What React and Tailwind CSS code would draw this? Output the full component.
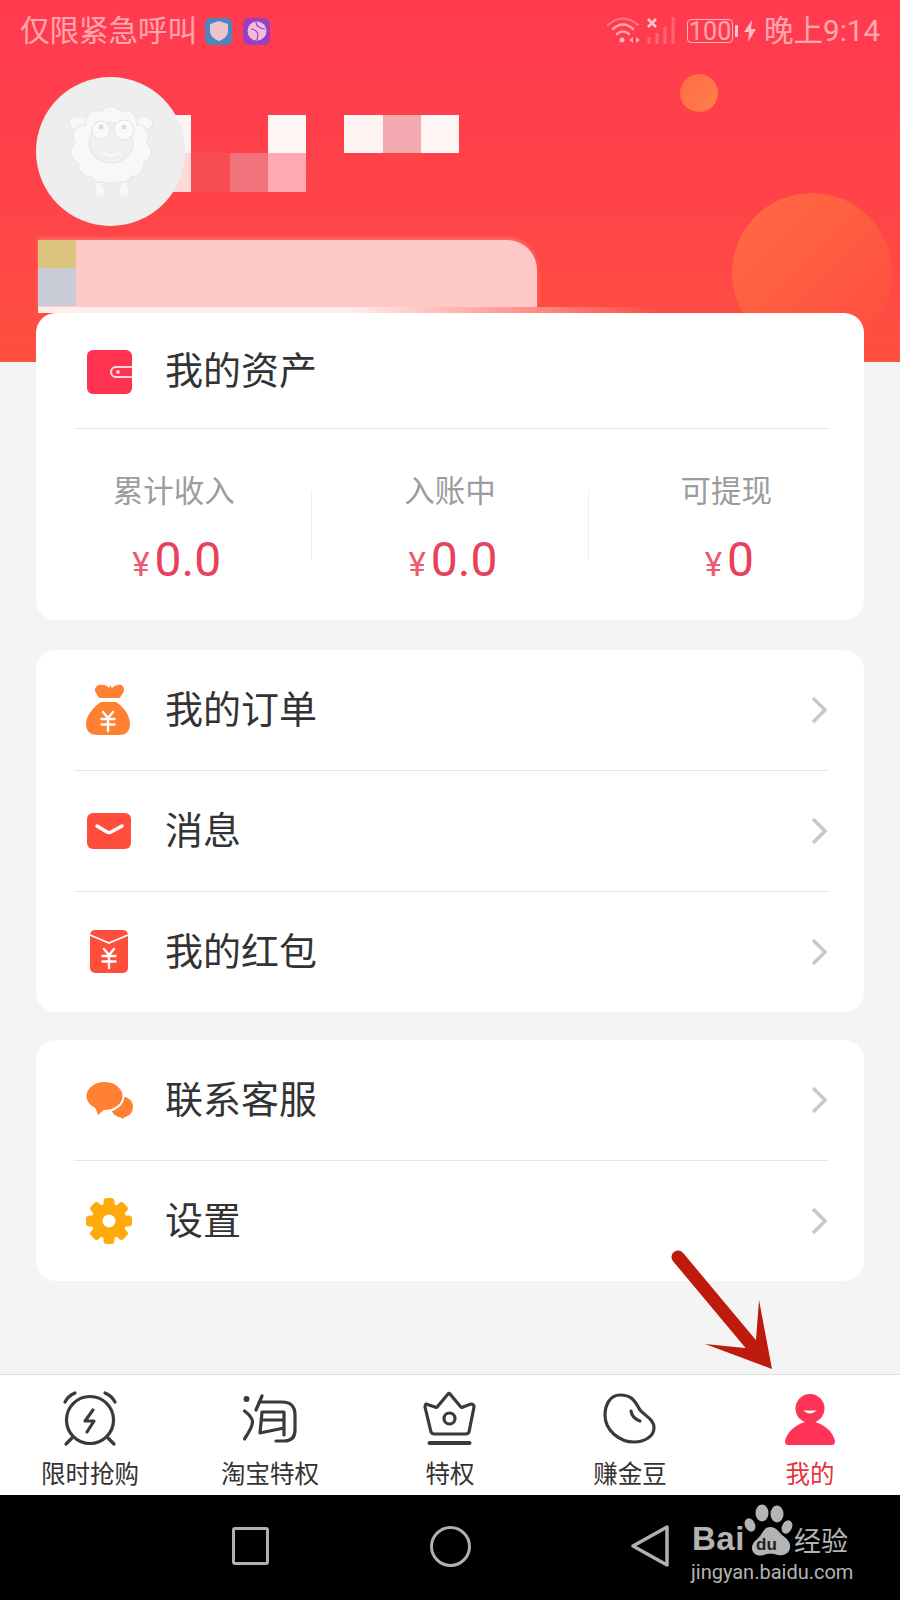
import React from "react";

const mosaic = [
  "bg-[#fff3f3]", "", "", "bg-[#fff5f5]", "", "bg-[#fff3f3]", "bg-[#f2a9af]", "bg-[#fff5f5]",
  "bg-[#ffd8d8]", "bg-[#f74c52]", "bg-[#f0737c]", "bg-[#fdaab0]", "", "", "", "",
];

function Sheep() {
  const wool = [
    [60, 28, 11], [46, 32, 11], [74, 32, 11], [34, 46, 11], [86, 46, 11], [31, 62, 11], [89, 62, 11],
    [39, 75, 11], [81, 75, 11], [50, 81, 11], [60, 82, 11], [70, 81, 11], [60, 55, 28],
  ];
  return (
    <svg width="120" height="120" viewBox="0 0 120 120" className="-mt-[3px]">
      <ellipse cx="29" cy="34" rx="11" ry="7.5" fill="#f8f8f8" stroke="#e6e6e6" strokeWidth="1" transform="rotate(12 29 34)" />
      <ellipse cx="91" cy="34" rx="11" ry="7.5" fill="#f8f8f8" stroke="#e6e6e6" strokeWidth="1" transform="rotate(-12 91 34)" />
      <path d="M48 90v10M73 90v10" stroke="#f8f8f8" strokeWidth="6" />
      <circle cx="49" cy="102" r="4.5" fill="#f8f8f8" />
      <circle cx="73" cy="102" r="4.5" fill="#f8f8f8" />
      {wool.map(([x, y, r]) => (
        <circle key={`${x}-${y}`} cx={x} cy={y} r={r + 1} fill="#e6e6e6" />
      ))}
      {wool.map(([x, y, r]) => (
        <circle key={`w${x}-${y}`} cx={x} cy={y} r={r} fill="#f8f8f8" />
      ))}
      <ellipse cx="60" cy="53" rx="22" ry="20" fill="#f0f0f0" stroke="#e4e4e4" strokeWidth="1" />
      <circle cx="50" cy="40" r="9" fill="#fafafa" stroke="#e2e2e2" strokeWidth="1" />
      <circle cx="73" cy="40" r="10" fill="#fafafa" stroke="#e2e2e2" strokeWidth="1" />
      <circle cx="50" cy="37" r="2.5" fill="#dcdcdc" />
      <circle cx="73" cy="37" r="2.5" fill="#dcdcdc" />
      <path d="M51 61Q60 70 70 61" fill="none" stroke="#fafafa" strokeWidth="2" />
    </svg>
  );
}

function StatusIcons() {
  return (
    <svg width="90" height="40" viewBox="605 10 90 40" className="mr-[-10px]">
      <g fill="none" stroke="#ffffff" strokeOpacity="0.55" strokeLinecap="round">
        <path d="M606 24Q621 11 636 24" strokeWidth="2" strokeOpacity="0.3" />
        <path d="M611 28Q621 19 631 28" strokeWidth="2.5" />
        <path d="M615 33Q621 28 627 33" strokeWidth="2.5" />
      </g>
      <circle cx="620" cy="39" r="2.5" fill="#ffffff" fillOpacity="0.6" />
      <path d="M631 36l-4 3 4 3zM634 36l4 3-4 3z" fill="#ffffff" fillOpacity="0.55" />
      <path d="M646 18l8 8M654 18l-8 8" stroke="#ffffff" strokeOpacity="0.7" strokeWidth="2.5" />
      <g stroke="#ffffff" strokeOpacity="0.22" strokeWidth="3">
        <path d="M647 36v7M655 32v11M663 26v17M671 16v27" />
      </g>
    </svg>
  );
}

function Header() {
  return (
    <div className="relative h-[362px] overflow-hidden bg-gradient-to-b from-[#ff3a50] via-[#ff4249] to-[#ff4f40]">
      <div className="absolute left-[680px] top-[74px] w-[38px] h-[38px] rounded-full bg-gradient-to-br from-[#ff6a48] to-[#ff8048]" />
      <div className="absolute left-[732px] top-[193px] w-[160px] h-[160px] rounded-full bg-gradient-to-br from-[#ff6a42] to-[#ff4c40]" />

      <div className="relative flex items-center justify-between h-[60px] pl-[20px] pr-[20px] pt-[2px] text-[#ffffff]/55">
        <div className="flex items-center">
          <span className="text-[29.5px] leading-[36px]">仅限紧急呼叫</span>
          <div className="ml-[8px] w-[27px] h-[27px] rounded-[6px] bg-[#4a88bd] flex items-center justify-center">
            <svg width="18" height="20" viewBox="0 0 18 20">
              <path d="M9 0l9 3v7c0 5-4 8-9 10-5-2-9-5-9-10V3z" fill="#eec2cf" />
            </svg>
          </div>
          <div className="ml-[11px] w-[27px] h-[27px] rounded-[6px] bg-[#9a3fbe] flex items-center justify-center">
            <svg width="20" height="20" viewBox="0 0 20 20">
              <circle cx="10" cy="10" r="9.5" fill="#f2bcdc" />
              <path d="M4 8q5 0 7 5l-1 6M9 1q0 6 9 7" fill="none" stroke="#9a3fbe" strokeWidth="1.2" />
            </svg>
          </div>
        </div>
        <div className="flex items-center">
          <StatusIcons />
          <div className="w-[46px] h-[24px] rounded-[4px] border border-[#ffffff]/60 flex items-center justify-center text-[25px] leading-none">
            100
          </div>
          <div className="ml-[2px] w-[3px] h-[12px] rounded-[1px] bg-[#ffffff]/70" />
          <svg width="12" height="22" viewBox="0 0 12 22" className="ml-[6px]">
            <path d="M8 0L0 12h5l-1 10 8-13H7z" fill="#ffffff" fillOpacity="0.65" />
          </svg>
          <span className="ml-[8px] text-[29.5px] leading-[36px]">晚上9:14</span>
        </div>
      </div>

      <div className="relative flex mt-[17px] ml-[36px]">
        <div className="relative z-10 w-[149px] h-[149px] rounded-full bg-[#eeeeee] flex items-center justify-center shrink-0">
          <Sheep />
        </div>
        <div className="grid grid-cols-[repeat(8,38.3px)] grid-rows-[38.3px_38.3px] mt-[38px] -ml-[32px]">
          {mosaic.map((c, i) => (
            <div key={i} className={c} />
          ))}
        </div>
      </div>

      <div className="relative flex ml-[38px] mt-[14px] w-[499px] h-[67px] bg-[#fec8c6] rounded-tr-[30px] shadow-[0_-2px_4px_rgba(254,200,198,0.35)]">
        <div className="w-[38px] flex flex-col">
          <div className="h-[28px] bg-[#dcc47e]" />
          <div className="h-[38px] bg-[#c9ccd6]" />
        </div>
      </div>
      <div className="relative ml-[38px] w-[620px] h-[6px] bg-gradient-to-r from-[#ffeeec] via-[#ffeeec] to-transparent" />
    </div>
  );
}

function Chevron() {
  return (
    <svg width="18" height="30" viewBox="0 0 18 30" className="shrink-0">
      <path d="M3 3l12 12L3 27" fill="none" stroke="#c8c8c8" strokeWidth="3.5" />
    </svg>
  );
}

function Yuan({ cx, cy }) {
  return (
    <path
      d={`M${cx - 5} ${cy - 9}l5 6 5-6M${cx - 6.5} ${cy - 2}h13M${cx - 6.5} ${cy + 3.5}h13M${cx} ${cy - 3}v13`}
      fill="none"
      stroke="#fff"
      strokeWidth="2.4"
      strokeLinecap="round"
      strokeLinejoin="round"
    />
  );
}

function WalletIcon() {
  return (
    <svg width="60" height="60" viewBox="80 340 60 60">
      <rect x="87" y="349" width="45" height="44" rx="6" fill="#ff3350" />
      <path d="M132 366h-16a5 5 0 0 0 0 10h16" fill="#ff3350" stroke="#ffd6dc" strokeWidth="2.2" />
      <circle cx="118" cy="371" r="1.9" fill="#ffd6dc" />
    </svg>
  );
}

function BagIcon() {
  return (
    <svg width="60" height="60" viewBox="80 680 60 60">
      <path d="M95 690c0-4 4-6 8-5 3 0 4 1 6 3l1-3 2 3c2-2 4-3 6-3 4-1 6 2 6 5 0 3-3 5-4 8h-21c-1-3-4-5-4-8z" fill="#ff8030" />
      <path d="M101 702h15c8 5 14 14 14 22 0 8-5 11-11 11h-21c-7 0-12-3-12-11 0-8 7-17 15-22z" fill="#ff8030" />
      <Yuan cx={108} cy={721} />
    </svg>
  );
}

function MailIcon() {
  return (
    <svg width="60" height="60" viewBox="80 802 60 60">
      <rect x="87" y="814" width="44" height="36" rx="6" fill="#ff4f3c" />
      <path d="M97 827l10 6q2 1 4 0l11-6" fill="none" stroke="#fff" strokeWidth="3.4" strokeLinecap="round" strokeLinejoin="round" />
    </svg>
  );
}

function PacketIcon() {
  return (
    <svg width="60" height="60" viewBox="80 922 60 60">
      <rect x="90" y="930" width="38" height="43" rx="5" fill="#ff4f3c" />
      <path d="M90 935l19 8 19-8" fill="none" stroke="#fff" strokeWidth="1.8" />
      <Yuan cx={109} cy={958} />
    </svg>
  );
}

function ChatIcon() {
  return (
    <svg width="60" height="60" viewBox="80 1070 60 60">
      <ellipse cx="122" cy="1107" rx="11" ry="10.5" fill="#ff8030" />
      <path d="M116 1114l7 5 3-4z" fill="#ff8030" />
      <ellipse cx="104.5" cy="1096" rx="19" ry="15" fill="#ff8030" stroke="#fff" strokeWidth="2" />
      <path d="M95 1107l3 8 6-5z" fill="#ff8030" />
    </svg>
  );
}

function GearIcon() {
  const cx = 109;
  const cy = 1221;
  const teeth = [0, 45, 90, 135, 180, 225, 270, 315];
  return (
    <svg width="60" height="60" viewBox="80 1191 60 60">
      {teeth.map((a) => (
        <rect
          key={a}
          x={cx - 5.5}
          y={cy - 23}
          width="11"
          height="12"
          rx="3.5"
          fill="#ffaa0a"
          transform={`rotate(${a} ${cx} ${cy})`}
        />
      ))}
      <circle cx={cx} cy={cy} r="17.5" fill="#ffaa0a" />
      <circle cx={cx} cy={cy} r="6.5" fill="#fff" />
    </svg>
  );
}

function Row({ icon, label, border }) {
  return (
    <>
      <div className="flex items-center h-[120px] pl-[44px] pr-[36px]">
        {icon}
        <span className="ml-[25px] flex-1 text-[38px] leading-[50px] text-[#333333]">{label}</span>
        <Chevron />
      </div>
      {border && <div className="h-px ml-[38px] mr-[36px] bg-[#e6e6e6]" />}
    </>
  );
}

function Stat({ label, value }) {
  return (
    <div className="flex-1 flex flex-col items-center">
      <div className="text-[30.5px] leading-[40px] text-[#9c9c9c]">{label}</div>
      <div className="mt-[18px] ml-[6px] flex items-baseline leading-[60px] text-[#e8415c]">
        <span className="text-[33px] mr-[5px] text-[#ee5a6e]">¥</span>
        <span className="text-[48px]">{value}</span>
      </div>
    </div>
  );
}

function Tab({ icon, label, active }) {
  return (
    <div className="flex-1 flex flex-col items-center pt-[13px]">
      {icon}
      <div className={`mt-[12px] text-[24.5px] leading-[30px] ${active ? "text-[#e8333f]" : "text-[#333333]"}`}>{label}</div>
    </div>
  );
}

const tabStroke = { fill: "none", stroke: "#3a3a3a", strokeWidth: 3.2, strokeLinecap: "round", strokeLinejoin: "round" };

function Watermark() {
  return (
    <div className="absolute left-[685px] top-[1500px] w-[170px] h-[85px] text-[#b4b4b4] font-['Liberation_Sans',sans-serif]">
      <svg width="170" height="85" viewBox="0 0 170 85" className="absolute left-0 top-0">
        <g fill="#b4b4b4">
          <ellipse cx="77" cy="13" rx="6.5" ry="8.5" />
          <ellipse cx="92" cy="14" rx="6.5" ry="8.5" />
          <ellipse cx="65" cy="25" rx="5" ry="7" transform="rotate(-25 65 25)" />
          <ellipse cx="102" cy="27" rx="5" ry="7" transform="rotate(25 102 27)" />
          <path d="M85 27c6 0 8 4 12 8 5 4 9 7 8 13-1 6-7 8-12 7-5-1-9-2-14 0-6 2-12-1-12-7 0-6 5-8 8-12 3-4 5-9 10-9z" />
        </g>
        <text x="71" y="50" fontSize="17" fontWeight="700" fill="#222" fontFamily="Liberation Sans">du</text>
      </svg>
      <span className="absolute left-[7px] top-[21px] text-[33px] leading-[36px] font-bold tracking-[0.5px]">Bai</span>
      <span className="absolute left-[109px] top-[24px] text-[27px] leading-[32px] font-['Noto_Sans_CJK_SC',sans-serif]">经验</span>
      <span className="absolute left-[6px] top-[60px] text-[20px] leading-[24px] font-['Roboto',sans-serif]">jingyan.baidu.com</span>
    </div>
  );
}

export default function App() {
  return (
    <div className="relative w-[900px] h-[1600px] flex flex-col overflow-hidden bg-[#f4f4f4] font-['Roboto','Noto_Sans_CJK_SC',sans-serif]">
      <Header />

      <main className="flex-1 px-[36px] -mt-[49px] relative">
        <section className="h-[307px] rounded-[20px] bg-white">
          <div className="flex items-center h-[115px] pl-[44px]">
            <WalletIcon />
            <span className="ml-[25px] text-[38px] leading-[50px] text-[#333333]">我的资产</span>
          </div>
          <div className="h-px ml-[38px] mr-[36px] bg-[#e6e6e6]" />
          <div className="flex items-start pt-[43px]">
            <Stat label="累计收入" value="0.0" />
            <div className="w-px h-[70px] mt-[18px] bg-[#eeeeee]" />
            <Stat label="入账中" value="0.0" />
            <div className="w-px h-[70px] mt-[18px] bg-[#eeeeee]" />
            <Stat label="可提现" value="0" />
          </div>
        </section>

        <section className="mt-[30px] rounded-[20px] bg-white">
          <Row icon={<BagIcon />} label="我的订单" border />
          <Row icon={<MailIcon />} label="消息" border />
          <Row icon={<PacketIcon />} label="我的红包" />
        </section>

        <section className="mt-[28px] rounded-[20px] bg-white">
          <Row icon={<ChatIcon />} label="联系客服" border />
          <Row icon={<GearIcon />} label="设置" />
        </section>
      </main>

      <nav className="flex h-[121px] border-t border-[#e0e0e0] bg-white">
        <Tab
          label="限时抢购"
          icon={
            <svg width="60" height="60" viewBox="60 1388 60 60" {...tabStroke}>
              <circle cx="90" cy="1420" r="23.5" />
              <path d="M65 1402q3-6 10-9M115 1402q-3-6-10-9M66 1444l6-6M114 1444l-6-6" />
              <path d="M93 1410l-8 11h9l-7 11" />
            </svg>
          }
        />
        <Tab
          label="淘宝特权"
          icon={
            <svg width="60" height="60" viewBox="240 1388 60 60" {...tabStroke}>
              <circle cx="246.5" cy="1399" r="3" fill="#3a3a3a" stroke="none" />
              <path d="M244.5 1411q8 6 8 11t-8 17" />
              <path d="M262 1396l-6 14M259 1402h23q13 0 13 13v15q0 11-11 11h-8" />
              <path d="M262 1412h22v23M262 1420h22M262 1412l-2 21 24-5" />
            </svg>
          }
        />
        <Tab
          label="特权"
          icon={
            <svg width="60" height="60" viewBox="420 1388 60 60" {...tabStroke}>
              <path d="M426 1404q-1 1-1 3l6 25q1 2 3 2h32q2 0 3-2l5-25q0-3-3-3l-8 3q-2 1-3-1l-10-12q-1-1-2 0l-10 12q-1 2-3 1z" />
              <circle cx="449.5" cy="1418.5" r="5.5" />
              <path d="M429.5 1443h40" strokeWidth="4" />
            </svg>
          }
        />
        <Tab
          label="赚金豆"
          icon={
            <svg width="60" height="60" viewBox="600 1388 60 60" {...tabStroke}>
              <path d="M620 1395c-10 0-15 10-15 20 0 16 15 27 29 27 11 0 20-6 20-14 0-9-9-12-14-18-4-6-6-15-20-15z" />
              <path d="M631 1411q1 7 9 10" />
            </svg>
          }
        />
        <Tab
          active
          label="我的"
          icon={
            <svg width="60" height="60" viewBox="780 1388 60 60">
              <circle cx="810" cy="1408.5" r="14.5" fill="#ff3355" />
              <path d="M788 1445q-3 0-3-4c2-9 10-16 20-19h10c10 3 18 10 20 19q0 4-3 4z" fill="#ff3355" />
              <path d="M805 1411q5 4 10 0z" fill="#fff" stroke="#fff" strokeWidth="1.2" />
            </svg>
          }
        />
      </nav>

      <footer className="flex items-center justify-center h-[105px] bg-black">
        <div className="w-[200px] flex justify-center -mt-[3px]">
          <div className="w-[37px] h-[38px] rounded-[3px] border-[3.5px] border-[#b0b0b0]" />
        </div>
        <div className="w-[200px] flex justify-center -mt-[3px]">
          <div className="w-[41px] h-[41px] rounded-full border-[3.5px] border-[#b0b0b0]" />
        </div>
        <div className="w-[200px] flex justify-center -mt-[3px]">
          <svg width="38" height="44" viewBox="0 0 38 44">
            <path d="M36 3L2 22l34 19z" fill="none" stroke="#b0b0b0" strokeWidth="3.5" strokeLinejoin="round" />
          </svg>
        </div>
      </footer>

      <Watermark />

      <svg width="110" height="125" viewBox="670 1250 110 125" className="absolute left-[670px] top-[1250px]">
        <path d="M678 1257l82 98" fill="none" stroke="#bf1a0e" strokeWidth="13" strokeLinecap="round" />
        <path d="M772 1369l-67-25 40 4 11-8 3-40z" fill="#bf1a0e" />
      </svg>
    </div>
  );
}
